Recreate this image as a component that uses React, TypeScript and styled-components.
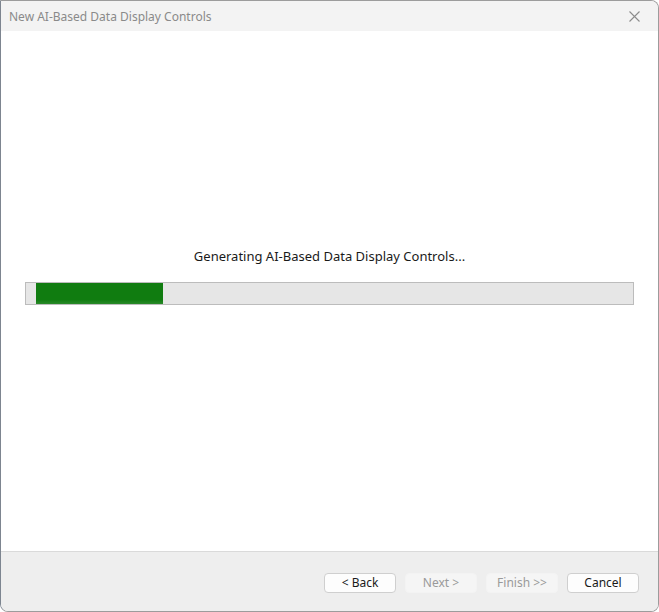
import styled, { createGlobalStyle } from 'styled-components';

const GlobalStyle = createGlobalStyle`
  html, body {
    margin: 0;
    padding: 0;
    background: #ffffff;
  }
  body {
    font-family: "Noto Sans", "Open Sans", "Liberation Sans", sans-serif;
  }
`;

const progress = 0.216;

export default function App(): JSX.Element {
  return (
    <>
      <GlobalStyle />
      <Window>
        <TitleBar>
          <Title>New AI-Based Data Display Controls</Title>
          <CloseButton aria-label="Close">
            <svg width="11" height="11" viewBox="0 0 11 11">
              <path d="M0.5 0.5 L10.5 10.5 M10.5 0.5 L0.5 10.5" stroke="#8c8c8c" strokeWidth="1.1" fill="none" />
            </svg>
          </CloseButton>
        </TitleBar>
        <Body>
          <Status>Generating AI-Based Data Display Controls...</Status>
          <Track>
            <Fill style={{ width: `${progress * 100}%` }} />
          </Track>
        </Body>
        <Footer>
          <Button>&lt; Back</Button>
          <Button disabled>Next &gt;</Button>
          <Button disabled>Finish &gt;&gt;</Button>
          <Button>Cancel</Button>
        </Footer>
      </Window>
    </>
  );
}

const Window = styled.div`
  box-sizing: border-box;
  width: 659px;
  height: 612px;
  display: flex;
  flex-direction: column;
  border: 1px solid #9c9c9c;
  border-left-color: #7d8590;
  border-radius: 0 8px 8px 8px;
  overflow: hidden;
  background: #ffffff;
`;

const TitleBar = styled.div`
  height: 30px;
  flex: none;
  display: flex;
  align-items: center;
  justify-content: space-between;
  background: #f3f3f3;
  padding: 0 0 0 8px;
`;

const Title = styled.span`
  font-size: 12px;
  color: #8a8a8a;
`;

const CloseButton = styled.div`
  width: 46px;
  height: 30px;
  display: flex;
  align-items: center;
  justify-content: center;
  margin-right: 1px;
`;

const Body = styled.div`
  flex: 1;
  display: flex;
  flex-direction: column;
  align-items: center;
  padding: 216px 24px 0 24px;
`;

const Status = styled.div`
  font-size: 13px;
  line-height: 18px;
  color: #1a1a1a;
  margin-bottom: 17px;
`;

const Track = styled.div`
  box-sizing: border-box;
  align-self: stretch;
  height: 23px;
  border: 1px solid #bcbcbc;
  background: #e6e6e6;
  padding: 0 10px;
  display: flex;
  align-items: stretch;
`;

const Fill = styled.div`
  background: linear-gradient(to bottom, #107c10 0%, #107c10 80%, #2a8a2a 100%);
`;

const Footer = styled.div`
  height: 60px;
  flex: none;
  box-sizing: border-box;
  border-top: 1px solid #dadada;
  background: #eeeeee;
  display: flex;
  justify-content: flex-end;
  align-items: center;
  gap: 9px;
  padding: 0 19px 0 0;
`;

const Button = styled.button`
  box-sizing: border-box;
  width: 72px;
  height: 20px;
  margin-top: 2px;
  padding: 0;
  font-family: "Noto Sans", "Open Sans", "Liberation Sans", sans-serif;
  font-size: 12px;
  line-height: 18px;
  color: #1a1a1a;
  background: #fdfdfd;
  border: 1px solid #cfcfcf;
  border-radius: 4px;

  &:disabled {
    color: #9a9a9a;
    background: #f5f5f5;
    border-color: #f3f3f3;
  }
`;
